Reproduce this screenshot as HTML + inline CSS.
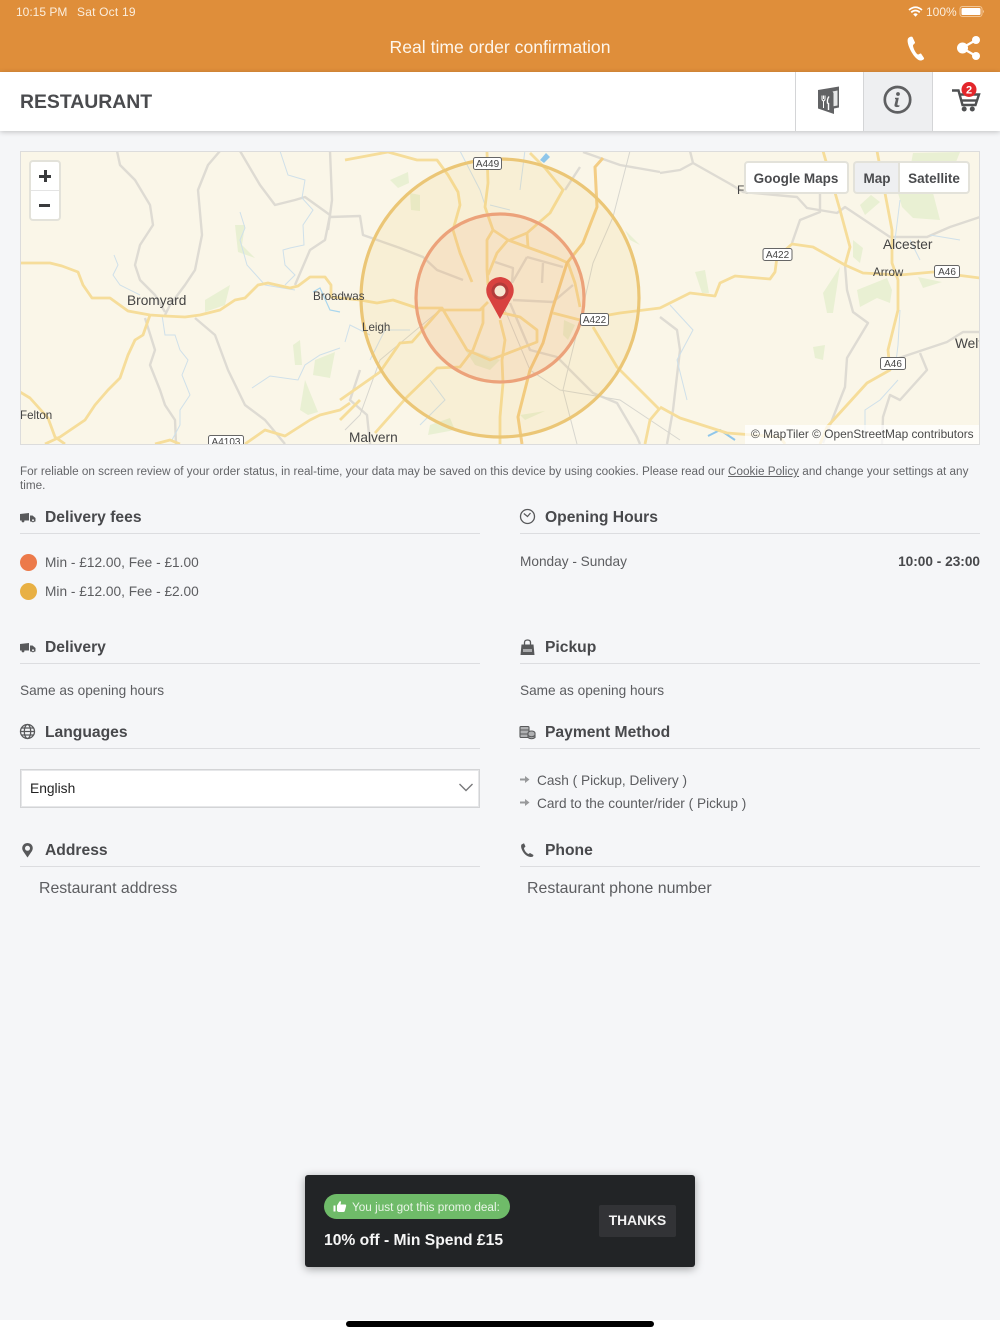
<!DOCTYPE html>
<html><head><meta charset="utf-8"><style>
html,body{margin:0;padding:0}
body{width:1000px;height:1334px;position:relative;overflow:hidden;background:#f5f6f8;font-family:"Liberation Sans",sans-serif;color:#55565a}
.a{position:absolute;white-space:nowrap}
.h{font-weight:bold;font-size:15.65px;line-height:20px;color:#48494c}
.l{position:absolute;height:1px;background:#dcdde0;width:460px}
.t{font-size:13.65px;line-height:18px;color:#5c5d60}
svg{position:absolute;overflow:hidden}
.ctl{position:absolute;background:#fff;border:2px solid #e3e2da;border-radius:4px;box-sizing:border-box;font-weight:bold;font-size:13.5px;color:#4a4b4e;text-align:center}
</style></head><body>
<div class="a" style="left:0;top:0;width:1000px;height:72px;background:#df8e3a"></div>
<div class="a" style="left:16px;top:5px;font-size:12px;line-height:14px;color:#fbeedd">10:15 PM</div>
<div class="a" style="left:77px;top:5px;font-size:12px;line-height:14px;color:#fbeedd;letter-spacing:.2px">Sat Oct 19</div>
<div class="a" style="left:926px;top:5px;font-size:12px;line-height:14px;color:#fbeedd">100%</div>
<svg style="left:908px;top:6px" width="15" height="11" viewBox="0 0 15 11"><path d="M1 4Q7.500-1.500 14 4M3.200 6.300Q7.500 2.600 11.800 6.300" fill="none" stroke="#fff" stroke-width="1.700"/><path d="M5.200 8.200Q7.500 6.300 9.800 8.200L7.500 10.800Z" fill="#fff"/></svg>
<svg style="left:959px;top:5px" width="26" height="13" viewBox="0 0 26 13"><rect x="1" y="1.500" width="22" height="10" rx="2.500" fill="none" stroke="#f3c796"/><rect x="2.500" y="3" width="19" height="7" rx="1.300" fill="#fff"/><path d="M24 5v3q1-.5 1-1.500T24 5" fill="#f3c796"/></svg>
<div class="a" style="left:0;top:38px;width:1000px;text-align:center;font-size:17.6px;line-height:18px;color:#fdf6ec">Real time order confirmation</div>
<svg style="left:905px;top:34px" width="22" height="28" viewBox="0 0 22 28"><path d="M3 4.500C4 3 6.500 2 7.500 3L10 8.500C10.300 9.500 8 10.500 8 11.500C8 14 11 20 13 20.500C14 20.500 15 19.200 16 19.500L19 24C19.500 25.200 17.500 26.500 15.500 26.500C12 26.500 7 20 4.500 14C3 10.500 2 6.500 3 4.500Z" fill="#fff"/></svg>
<svg style="left:955px;top:34px" width="28" height="28" viewBox="0 0 28 28"><path d="M7 14L21 6M7 14L21 22" stroke="#fff" stroke-width="2.200"/><circle cx="7.500" cy="14" r="5.500" fill="#fff"/><circle cx="21" cy="6" r="4" fill="#fff"/><circle cx="21" cy="22" r="4" fill="#fff"/></svg>

<div class="a" style="left:0;top:72px;width:1000px;height:59px;background:#fff;box-shadow:0 1px 5px rgba(0,0,0,.22)"></div>
<div class="a" style="left:863px;top:72px;width:69px;height:59px;background:#eeeff1"></div>
<div class="a" style="left:795px;top:72px;width:1px;height:59px;background:#d4d5d7"></div>
<div class="a" style="left:863px;top:72px;width:1px;height:59px;background:#d4d5d7"></div>
<div class="a" style="left:932px;top:72px;width:1px;height:59px;background:#d4d5d7"></div>
<div class="a" style="left:20px;top:91px;font-size:19.4px;line-height:23px;font-weight:bold;color:#4a4b4e">RESTAURANT</div>
<svg style="left:817px;top:85px" width="24" height="31" viewBox="0 0 24 31"><path d="M1 5L22 1.500V22.500L17 23.500V29L1 23.500Z" fill="#626365"/><path d="M15.500 6.500L20.500 5.500V20.500L16.500 21.300V8Z" fill="#fff" fill-opacity=".85"/><path d="M5 10.500V14Q5 15.500 6.500 16V23M6.500 10.500V14M8 10.500V14Q8 15.500 6.500 16" stroke="#fff" stroke-width="1" fill="none"/><path d="M12 11.500Q10 14 10.500 18L11.500 18.500V25" stroke="#fff" stroke-width="1.400" fill="none"/></svg>
<svg style="left:883px;top:85px" width="29" height="29" viewBox="0 0 29 29"><circle cx="14.500" cy="14.700" r="12.700" fill="none" stroke="#5f6062" stroke-width="2.700"/><circle cx="15" cy="9" r="1.900" fill="#5f6062"/><path d="M12 12.800H15.800L14.400 19.500Q14.200 20.800 16.600 20.200L16.200 21.800Q11 23 11.500 19.800L12.900 14.300H12Z" fill="#5f6062"/></svg>
<svg style="left:951px;top:82px" width="32" height="32" viewBox="0 0 32 32"><path d="M1 8.500H7.500L11.500 23H24.500L28 12.500H9" fill="none" stroke="#4f5052" stroke-width="2.400"/><path d="M10 18.500H25.500" stroke="#4f5052" stroke-width="2.400"/><circle cx="13.200" cy="27" r="2.500" fill="#4f5052"/><circle cx="21.300" cy="27" r="2.500" fill="#4f5052"/><circle cx="18" cy="7.500" r="7.500" fill="#e3262b"/><text x="18" y="11.300" font-size="11" font-weight="bold" text-anchor="middle" fill="#fff" font-family="Liberation Sans">2</text></svg>

<svg style="left:20px;top:151px;filter:blur(.3px)" width="960" height="294" viewBox="20 151 960 294">
<rect x="20" y="151" width="960" height="294" fill="#faf6e8"/>
<g fill="#e9f0d3">
<path d="M898 193L908 180L913 153L960 152L950 177L933 193L940 220L913 218L902 207Z"/>
<path d="M860 307L857 290L887 278L892 290L890 303L877 298Z"/>
<path d="M823 293L840 267L833 313L827 313Z"/>
<path d="M853 240L863 248L860 263L853 257Z"/>
<path d="M860 205L871 195L880 202L865 215Z"/>
<path d="M695 272L705 270L709 293L702 293Z"/>
<path d="M813 347L825 345L823 360L815 358Z"/>
<path d="M918 277L942 282L923 288Z"/>
<path d="M205 300L230 285L225 305L205 312Z"/>
<path d="M235 225L245 225L242 245L255 258L238 252Z"/>
<path d="M293 345L300 340L302 365L295 365Z"/>
<path d="M315 360L335 352L330 378L313 375Z"/>
<path d="M300 410L305 380L318 412L308 415Z"/>
<path d="M390 180L408 172L409 183L398 188Z"/>
<path d="M410 193L420 195L420 211L411 210Z"/>
<path d="M464 348L500 360L490 370L475 365Z"/>
<path d="M564 320L575 325L568 340L563 335Z"/>
<path d="M520 415L545 411L525 420Z"/>
<path d="M430 425L450 418L455 430L428 435Z"/>
<path d="M625 230L640 245L630 240Z"/>
</g>
<g fill="none" stroke="#dedbd3" stroke-width="2.400" stroke-linejoin="round">
<path d="M117 151L120 165L135 180L150 205L153 225L140 245L135 265L140 280L155 295L165 312"/>
<path d="M220 151L208 165L198 190L202 235L195 270L185 285L170 305L165 315"/>
<path d="M145 318L155 350L150 365L160 390L165 405L175 420L176 444"/>
<path d="M195 318L215 335L228 370L245 405L265 420L285 444"/>
<path d="M240 151L260 185L275 205L295 200L305 197L330 215L325 240L310 250L295 285"/>
<path d="M330 151L332 200L328 230"/>
<path d="M330 217L360 216L363 235L400 248L423 257L437 270L463 280"/>
<path d="M527 257L563 267M543 263L542 283M495 262L513 268L512 283M527 257L512 283"/>
<path d="M513 300L553 302L573 285"/>
<path d="M510 303L530 350L557 357L593 393L617 403L637 437L640 444"/>
<path d="M690 151L693 163L732 185L743 192L797 197L807 208L837 213L845 207L890 237L927 237L950 227L980 217"/>
<path d="M660 173L680 170L693 163"/>
<path d="M820 193L820 212L800 220L792 243"/>
<path d="M845 265L847 290L853 312L868 323L847 358L845 387L823 443"/>
<path d="M660 317L677 330L680 350L673 410L667 444"/>
<path d="M893 360L947 342L963 332L980 332"/>
<path d="M920 353L927 370L900 400L890 395L883 417L882 444"/>
<path d="M580 167L565 190"/>
<path d="M583 152L620 165L660 172"/>
<path d="M360 370L350 400L367 415L370 444"/>
</g>
<g fill="none" stroke="#d7d6cf" stroke-width="1">
<path d="M630 151L613 217L593 263L580 320L567 373L563 390L577 444"/>
<path d="M440 310L380 360L360 415L345 430"/>
<path d="M505 310L530 370L560 390L620 400L680 440"/>
</g>
<g fill="none" stroke="#cfe0ea" stroke-width="1">
<path d="M114 255L118 265L113 275L120 285L140 295"/>
<path d="M162 315L165 335L175 335L180 350L188 360L182 375L190 395L180 410L180 425L172 440"/>
<path d="M240 212L245 228L240 240L247 265L265 285L295 290"/>
<path d="M280 151L288 175L305 180L302 198L313 210L303 225L304 245L290 248L283 250L285 265L295 275L285 285"/>
<path d="M252 388L270 376L298 380L305 365L320 355L340 348"/>
<path d="M345 342L350 325L370 335"/>
<path d="M370 360L385 330L410 330"/>
<path d="M460 151L480 190L485 205M520 190L525 150M490 205L510 210"/>
<path d="M670 305L693 330L677 360L687 400"/>
<path d="M900 310L898 345L895 370M898 380L880 400L865 410L865 440"/>
<path d="M900 200L895 240M910 240L920 260M930 235L960 240"/>
<path d="M420 425L445 400L430 380"/>
</g>
<path d="M313 292L320 288L330 310L340 312" fill="none" stroke="#a9d6ee" stroke-width="1.200"/>
<path d="M708 436L720 430L735 440" fill="none" stroke="#8fc6ea" stroke-width="2"/>
<path d="M540 160L546 153L550 157L544 163Z" fill="#8fc6ea"/>
<g fill="none" stroke="#f6dd9a" stroke-width="2.800" stroke-linejoin="round">
<path d="M20 263L50 263L62 266L78 272L83 285L92 298L110 298L128 311L150 315L165 316L185 317L200 315L220 310L235 300L245 298L258 285L268 283L290 288L298 286L310 277L325 277L331 285L331 297L360 300L377 303L393 300L417 308L442 308L467 350L490 360L537 342L537 330L520 317L503 313"/>
<path d="M150 315L143 335L135 340L128 355L120 378L108 390L95 405L85 420L60 437L45 444"/>
<path d="M20 392L30 398L48 418L55 437L65 444"/>
<path d="M155 444L170 440L180 444M245 444L265 430L285 436L310 420L320 415L340 410L350 403"/>
<path d="M340 400L380 372L400 343L412 342L440 310L480 310L488 302"/>
<path d="M388 152L417 160L437 160L448 175L458 192L460 205L453 230L460 253L472 282"/>
<path d="M345 160L388 152"/>
<path d="M487 152L488 183L485 207L493 230L508 240L527 247L557 258L568 263L575 283L580 307"/>
<path d="M493 230L487 240L487 270L488 285"/>
<path d="M508 240L497 253L488 275"/>
<path d="M510 240L527 233L550 213L563 190L545 168L530 153"/>
<path d="M527 233L528 247"/>
<path d="M375 433L407 397L437 368L460 367L473 350L483 323L483 307"/>
<path d="M500 320L505 340L502 360L503 383L500 417L500 444"/>
<path d="M553 313L580 320L620 313L660 308L690 293L715 296L720 283L735 276L770 279L775 272L777 257L792 244L813 247L845 265L863 273L900 275L933 272L980 278"/>
<path d="M593 327L617 367L660 410"/>
<path d="M823 151L840 210L850 247L845 265"/>
<path d="M877 151L892 230L892 263L898 280L898 310L888 350L890 370L867 383L827 427L820 444"/>
<path d="M660 407L680 418L727 433L780 437L785 444"/>
<path d="M660 408L650 420L645 444"/>
<path d="M340 420L360 400"/>
</g>
<path d="M603 158L595 167L597 207L583 243L567 263L553 307L543 343L530 370L518 417L522 444" fill="none" stroke="#f3cd85" stroke-width="3"/>
<circle cx="500" cy="298" r="139" fill="#f0c050" fill-opacity=".12" stroke="#ebc676" stroke-width="3.200"/>
<circle cx="500" cy="298" r="84" fill="#ea8a50" fill-opacity=".11" stroke="#eca27a" stroke-width="3.200"/>
<path d="M500 319L489 299C483 290 487 278 500 277C513 278 517 290 511 299Z" fill="#d8423f"/>
<circle cx="500" cy="291" r="8.500" fill="#b33b3a"/>
<circle cx="500" cy="291" r="5.500" fill="#f6e7d2"/>
<g font-family="Liberation Sans" fill="#444">
<text x="127" y="305" font-size="13.7">Bromyard</text>
<text x="883" y="249" font-size="13.7">Alcester</text>
<text x="313" y="300" font-size="11.6">Broadwas</text>
<text x="362" y="331" font-size="11.6">Leigh</text>
<text x="873" y="276" font-size="11.6">Arrow</text>
<text x="20" y="419" font-size="11.6">Felton</text>
<text x="349" y="442" font-size="13.7">Malvern</text>
<text x="955" y="348" font-size="13.7">Welt</text>
<text x="737" y="194" font-size="12">Feckenham</text>
</g>
<g font-family="Liberation Sans" font-size="10" fill="#444" text-anchor="middle">
<g fill="#fff" stroke="#666"><rect x="473.500" y="157.500" width="28" height="12" rx="2"/><rect x="580.500" y="313.500" width="28" height="12" rx="2"/><rect x="763" y="248.500" width="29" height="12" rx="2"/><rect x="934.500" y="265.500" width="25" height="12" rx="2"/><rect x="880.500" y="357.500" width="25" height="12" rx="2"/><rect x="208.500" y="435.500" width="35" height="12" rx="2"/></g>
<text x="487.500" y="167" fill="#444">A449</text><text x="594.500" y="323">A422</text><text x="777.500" y="258">A422</text><text x="947" y="275">A46</text><text x="893" y="367">A46</text><text x="226" y="445">A4103</text>
</g>
<rect x="745" y="425" width="235" height="20" fill="#fff" fill-opacity=".72"/>
<text x="751" y="438" font-family="Liberation Sans" font-size="11.9" fill="#4a4a4a">© MapTiler © OpenStreetMap contributors</text>
<rect x="20.500" y="151.500" width="959" height="293" fill="none" stroke="#dcdcdc"/>
</svg>
<div class="ctl" style="left:29px;top:160px;width:32px;height:61px"></div>
<div class="a" style="left:31px;top:190px;width:28px;height:1px;background:#e4e4e4"></div>
<div class="a" style="left:39px;top:175px;width:12px;height:3px;background:#3a3b3d"></div>
<div class="a" style="left:43.500px;top:170px;width:3px;height:12px;background:#3a3b3d"></div>
<div class="a" style="left:39px;top:204px;width:11px;height:3px;background:#3a3b3d"></div>
<div class="ctl" style="left:744px;top:161px;width:105px;height:33px;line-height:31px;padding-right:1px">Google Maps</div>
<div class="ctl" style="left:853px;top:161px;width:48px;height:33px;line-height:31px;background:#eeeff1;border-radius:4px 0 0 4px;border-right:0;padding-right:2px">Map</div>
<div class="ctl" style="left:898px;top:161px;width:72px;height:33px;line-height:31px;border-radius:0 4px 4px 0">Satellite</div>

<div class="a" style="left:20px;top:465px;width:960px;white-space:normal;font-size:11.72px;line-height:14px;color:#646568">For reliable on screen review of your order status, in real-time, your data may be saved on this device by using cookies. Please read our <span style="text-decoration:underline">Cookie Policy</span> and change your settings at any time.</div>

<div class="a h" style="left:45px;top:508px">Delivery fees</div><div class="l" style="left:20px;top:533px"></div>
<div class="a h" style="left:545px;top:508px">Opening Hours</div><div class="l" style="left:520px;top:533px"></div>
<svg style="left:20px;top:512px" width="16" height="11" viewBox="0 0 16 11"><path d="M0 2L9 1V8.500H0ZM10 3.500H12.500L15.500 6V9.500H10Z" fill="#58595b"/><circle cx="3" cy="9" r="1.400" fill="#58595b"/><circle cx="13" cy="8.300" r="1.500" fill="#f5f6f8" stroke="#58595b"/></svg>
<svg style="left:519px;top:508px" width="17" height="17" viewBox="0 0 17 17"><circle cx="8.500" cy="8.500" r="7" fill="none" stroke="#58595b" stroke-width="1.300"/><path d="M4.800 5.500L8.500 8.500L11.500 5" fill="none" stroke="#58595b" stroke-width="1.200"/></svg>
<div class="a" style="left:20px;top:554px;width:17px;height:17px;border-radius:50%;background:#ec7a4a"></div>
<div class="a" style="left:20px;top:583px;width:17px;height:17px;border-radius:50%;background:#e8b044"></div>
<div class="a t" style="left:45px;top:554px;font-size:13.7px">Min - £12.00, Fee - £1.00</div>
<div class="a t" style="left:45px;top:583px;font-size:13.7px">Min - £12.00, Fee - £2.00</div>
<div class="a t" style="left:520px;top:553px">Monday - Sunday</div>
<div class="a t" style="right:20px;top:553px;font-weight:bold;color:#48494c">10:00 - 23:00</div>

<div class="a h" style="left:45px;top:638px">Delivery</div><div class="l" style="left:20px;top:663px"></div>
<div class="a h" style="left:545px;top:638px">Pickup</div><div class="l" style="left:520px;top:663px"></div>
<svg style="left:20px;top:642px" width="16" height="11" viewBox="0 0 16 11"><path d="M0 2L9 1V8.500H0ZM10 3.500H12.500L15.500 6V9.500H10Z" fill="#58595b"/><circle cx="3" cy="9" r="1.400" fill="#58595b"/><circle cx="13" cy="8.300" r="1.500" fill="#f5f6f8" stroke="#58595b"/></svg>
<svg style="left:520px;top:639px" width="15" height="17" viewBox="0 0 15 17"><path d="M1.500 5.500H13.500L14.500 16H.5Z" fill="#58595b"/><path d="M4.500 6V3.500Q4.500 1 7.500 1T10.500 3.500V6" fill="none" stroke="#58595b" stroke-width="1.300"/><rect x="3" y="10" width="9" height="3" fill="#a9aaac"/></svg>
<div class="a t" style="left:20px;top:682px">Same as opening hours</div>
<div class="a t" style="left:520px;top:682px">Same as opening hours</div>

<div class="a h" style="left:45px;top:723px">Languages</div><div class="l" style="left:20px;top:748px"></div>
<div class="a h" style="left:545px;top:723px">Payment Method</div><div class="l" style="left:520px;top:748px"></div>
<svg style="left:19px;top:723px" width="17" height="17" viewBox="0 0 17 17"><g fill="none" stroke="#58595b" stroke-width="1.300"><circle cx="8.500" cy="8.500" r="7"/><ellipse cx="8.500" cy="8.500" rx="3.200" ry="7"/><path d="M1.500 8.500H15.500M2.500 5H14.500M2.500 12H14.500"/></g></svg>
<svg style="left:519px;top:725px" width="17" height="15" viewBox="0 0 17 15"><g fill="#b0b1b3" stroke="#58595b" stroke-width="1.100"><rect x="1" y="1.500" width="9" height="11" rx="1"/><path d="M1 5H10M1 9H10"/><ellipse cx="12.500" cy="8" rx="3.500" ry="2"/><path d="M9 8V12.500Q12.500 15 16 12.500V8"/><path d="M9 10.500Q12.500 13 16 10.500"/></g></svg>
<div class="a" style="left:20px;top:769px;width:460px;height:39px;box-sizing:border-box;background:#fff;border:1px solid #d3d4d6;font-size:13.8px;line-height:37px;color:#222;padding-left:9px;box-shadow:inset 0 0 0 1px #e6e7e9">English</div>
<svg style="left:458px;top:782px" width="16" height="11" viewBox="0 0 16 11"><path d="M1.500 2L8 8.500L14.500 2" fill="none" stroke="#77787a" stroke-width="1.400"/></svg>
<svg style="left:520px;top:775px" width="10" height="9" viewBox="0 0 10 9"><path d="M0 3.500H5V1L9.500 4.500L5 8V5.500H0Z" fill="#98999b"/></svg>
<svg style="left:520px;top:798px" width="10" height="9" viewBox="0 0 10 9"><path d="M0 3.500H5V1L9.500 4.500L5 8V5.500H0Z" fill="#98999b"/></svg>
<div class="a t" style="left:537px;top:772px">Cash ( Pickup, Delivery )</div>
<div class="a t" style="left:537px;top:795px">Card to the counter/rider ( Pickup )</div>

<div class="a h" style="left:45px;top:841px">Address</div><div class="l" style="left:20px;top:866px"></div>
<div class="a h" style="left:545px;top:841px">Phone</div><div class="l" style="left:520px;top:866px"></div>
<svg style="left:21px;top:842px" width="13" height="16" viewBox="0 0 13 16"><path fill-rule="evenodd" d="M6.500 15.500L2 9C0 5.500 2 1 6.500 1S13 5.500 11 9ZM6.500 3.800A2.500 2.500 0 1 0 6.500 8.800A2.500 2.500 0 1 0 6.500 3.800Z" fill="#58595b"/></svg>
<svg style="left:520px;top:842px" width="15" height="16" viewBox="0 0 15 16"><path d="M1.500 2.500L4 1.200L5.500 4.500L4 6C4 8 6.500 11.500 8.500 12L10 11L13.500 13L13 14.500C10 16 6 14 3.500 10.500C1.500 7.500.5 4.500 1.500 2.500Z" fill="#58595b"/></svg>
<div class="a" style="left:39px;top:879px;font-size:15.85px;line-height:20px;color:#5c5d60">Restaurant address</div>
<div class="a" style="left:527px;top:879px;font-size:15.9px;line-height:20px;color:#5c5d60">Restaurant phone number</div>

<div class="a" style="left:305px;top:1175px;width:390px;height:92px;background:#222426;border-radius:3px;box-shadow:0 2px 9px rgba(0,0,0,.35)"></div>
<div class="a" style="left:324px;top:1194px;width:186px;height:25px;background:#6fbb69;border-radius:13px"></div>
<svg style="left:333px;top:1200px" width="14" height="13" viewBox="0 0 14 13"><path d="M0.500 5.500H2.500V11.500H.5ZM4 5.500L6.500 1.500Q8 .5 8 2.500L7.500 4.500H12.500Q13.500 5 13 6.500L11.800 11Q11.500 12 10.500 12H5.500L4 11Z" fill="#fff"/></svg>
<div class="a" style="left:352px;top:1201px;font-size:11.75px;line-height:14px;color:#e9f5e7">You just got this promo deal:</div>
<div class="a" style="left:324px;top:1231px;font-size:15.65px;line-height:19px;font-weight:bold;color:#f6f6f6">10% off - Min Spend £15</div>
<div class="a" style="left:599px;top:1205px;width:77px;height:32px;background:#323336;border-radius:2px;text-align:center;font-size:13.8px;line-height:32px;font-weight:bold;color:#f2f2f2">THANKS</div>

<div class="a" style="left:0;top:1320px;width:1000px;height:14px;background:#fff"></div>
<div class="a" style="left:346px;top:1321px;width:308px;height:6px;border-radius:3px;background:#000"></div>
</body></html>
